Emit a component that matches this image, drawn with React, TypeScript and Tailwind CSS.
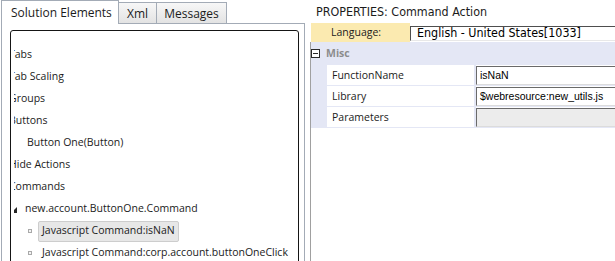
import React from "react";

const treeFont = "font-['Open_Sans',sans-serif] text-[10.5px] text-[#1b1b1b]";

function Row({ children, pl = 0 }: { children: React.ReactNode; pl?: number }) {
  return (
    <div className="h-[22px] flex items-center whitespace-nowrap" style={{ paddingLeft: pl }}>
      {children}
    </div>
  );
}

function Bullet() {
  return <span className="inline-block w-[4px] h-[4px] border border-[#a9a9a9] bg-[#f4f4f4]" />;
}

function LeftPanel() {
  return (
    <div className="w-[306px] shrink-0 flex flex-col">
      <div className="h-[24px] flex items-end pl-[1px] font-['Open_Sans',sans-serif] text-[12px] text-[#1b1b1b]">
        <div className="relative z-10 h-[24px] w-[118px] -mb-px bg-white border border-b-0 border-[#a3abb6] flex items-center pl-[9px] leading-none pt-[1px]">
          Solution Elements
        </div>
        <div className="h-[21px] w-[39px] -ml-px border border-b-0 border-[#a3abb6] bg-gradient-to-b from-[#f7f7f7] to-[#e3e3e3] flex items-center justify-center leading-none pt-[1px]">
          Xml
        </div>
        <div className="h-[21px] w-[71px] -ml-px border border-b-0 border-[#a3abb6] bg-gradient-to-b from-[#f7f7f7] to-[#e3e3e3] flex items-center justify-center leading-none pt-[1px]">
          Messages
        </div>
      </div>
      <div className="ml-[1px] w-[304px] h-[300px] border border-[#a3abb6] bg-white pt-[6px] pl-[8px] pr-[5px]">
        <div className="h-[280px] border border-[#151515] rounded-[3px] bg-white">
          <div className="ml-[3px] mr-[2px] h-full overflow-hidden pt-[13px]">
            <div className={`-ml-[5px] ${treeFont}`}>
              <Row>Tabs</Row>
              <Row>Tab Scaling</Row>
              <Row>Groups</Row>
              <Row>Buttons</Row>
              <Row pl={18}>Button One(Button)</Row>
              <Row>Hide Actions</Row>
              <Row>Commands</Row>
              <Row pl={2}>
                <svg width="6" height="6" viewBox="0 0 6 6" className="mr-[8px] mt-[2px]">
                  <path d="M6 0 L6 6 L0 6 Z" fill="#262626" />
                </svg>
                new.account.ButtonOne.Command
              </Row>
              <Row pl={19}>
                <Bullet />
                <span className="ml-[6px] h-[21px] flex items-center px-[3px] bg-[#e7e7e7] border border-[#cdcdcd] rounded-[2px]">
                  Javascript Command:isNaN
                </span>
              </Row>
              <Row pl={19}>
                <Bullet />
                <span className="ml-[6px] px-[4px]">Javascript Command:corp.account.buttonOneClick</span>
              </Row>
            </div>
          </div>
        </div>
      </div>
    </div>
  );
}

function PropRow({ label, value, disabled }: { label: string; value?: string; disabled?: boolean }) {
  return (
    <div className="h-[21px] flex border-b border-[#e4e7f5]">
      <div className="w-[16px] bg-[#e4e7f5]" />
      <div className="w-[147px] bg-white flex items-center pl-[5px] pt-[1px] font-['Open_Sans',sans-serif] text-[10.5px] text-[#1b1b1b]">
        {label}
      </div>
      <div className="w-[2px] bg-[#e4e7f5]" />
      <div className="flex-1 pt-[1px]">
        <div
          className={`h-[19px] border-t border-l border-[#6a6a6a] border-b border-b-[#dcdcdc] flex items-center pl-[3px] font-['Liberation_Sans',sans-serif] text-[10.5px] text-black ${
            disabled ? "bg-[#ececec]" : "bg-white"
          }`}
        >
          {value}
        </div>
      </div>
    </div>
  );
}

function RightPanel() {
  return (
    <div className="flex-1 flex flex-col">
      <div className="h-[23px] pl-[6px] pt-[2px] flex items-center font-['DejaVu_Sans_Condensed',sans-serif] text-[12.4px] text-[#1b1b1b]">
        PROPERTIES: Command Action
      </div>
      <div className="h-[19px] ml-[1px] flex">
        <div className="w-[99px] bg-[#fbeab0] flex items-center pl-[20px] font-['Open_Sans',sans-serif] text-[10.5px] text-[#1b1b1b]">
          Language:
        </div>
        <div className="flex-1 pt-[3px]">
          <div className="h-[15px] border-t border-l border-[#4e4e4e] border-b border-b-[#e8e8e8] bg-white flex items-center pl-[6px] font-['DejaVu_Sans_Condensed',sans-serif] text-[12.4px] text-black leading-none">
            English - United States[1033]
          </div>
        </div>
      </div>
      <div className="flex-1 border-l border-[#a0a0a0]">
        <div className="h-[23px] bg-[#e4e7f5] flex items-center">
          <div className="w-[9px] h-[9px] border border-[#2a2a2a] bg-white flex items-center justify-center">
            <div className="w-[5px] h-px bg-[#2a2a2a]" />
          </div>
          <span className="ml-[6px] font-['Open_Sans',sans-serif] text-[10.5px] font-bold text-[#8d8d8d]">Misc</span>
        </div>
        <PropRow label="FunctionName" value="isNaN" />
        <PropRow label="Library" value="$webresource:new_utils.js" />
        <PropRow label="Parameters" disabled />
      </div>
    </div>
  );
}

export default function App() {
  return (
    <div className="w-[615px] h-[261px] overflow-hidden bg-white flex gap-[4px]">
      <LeftPanel />
      <RightPanel />
    </div>
  );
}
